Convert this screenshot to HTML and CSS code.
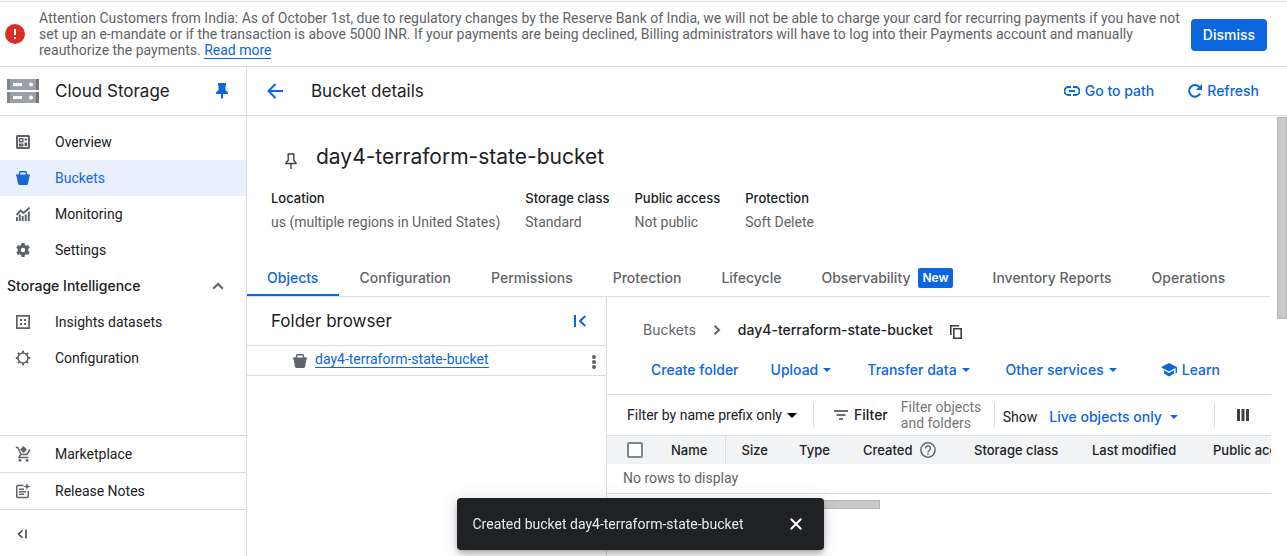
FILE: index.html
```html
<!DOCTYPE html>
<html lang="en">
<head>
<meta charset="utf-8">
<title>Bucket details – Cloud Storage</title>
<link rel="stylesheet" href="styles.css">
</head>
<body>
<div class="banner" role="alert">
  <svg class="banner-icon" width="20" height="20" viewBox="0 0 20 20"><circle cx="10" cy="10" r="10" fill="#d93025"/><path d="M9 5h2v6H9zM9 13h2v2H9z" fill="#fff"/></svg>
  <p class="banner-text">Attention Customers from India: As of October 1st, due to regulatory changes by the Reserve Bank of India, we will not be able to charge your card for recurring payments if you have not set up an e-mandate or if the transaction is above 5000 INR. If your payments are being declined, Billing administrators will have to log into their Payments account and manually reauthorize the payments. <a class="link" href="#">Read more</a></p>
  <button class="dismiss" type="button">Dismiss</button>
</div>
<div class="shell">
  <aside class="sidebar">
    <div class="product">
      <svg class="product-icon" width="32" height="24" viewBox="0 0 32 24"><path d="M0 0h32v11H0zM0 13h32v11H0z" fill="#9aa0a6"/><path d="M0 0h3v11H0zM0 13h3v11H0z" fill="#80868b"/><path d="M29 0h3v11h-3zM29 13h3v11h-3z" fill="#757575"/><path d="M6 4h9v3H6zM6 17h9v3H6z" fill="#fff"/><circle cx="24" cy="5.500" r="2" fill="#fff"/><circle cx="24" cy="18.500" r="2" fill="#fff"/></svg>
      <span class="product-name">Cloud Storage</span>
      <button class="icon-button blue" type="button" aria-label="Unpin"><svg width="12" height="16" viewBox="0 0 12 16" fill="currentColor"><path d="M2 0h8v2l-.5.500V7L12 9.500V11H7v4l-1 1-1-1v-4H0V9.500L2.500 7V2.500L2 2z"/></svg></button>
    </div>
    <nav class="nav">
      <a class="nav-item" href="#"><svg width="14" height="14" viewBox="0 0 14 14" fill="none" stroke="currentColor"><rect x="1" y="1" width="12" height="12" rx=".5" stroke-width="2"/><path stroke-width="1.500" d="M3.500 3.750h3.250v3H3.500zM3.500 9.250h3.250v1.500H3.500zM9.250 3.500v2M9.250 7.500v3.500M10.500 3.500v2M10.500 7.500v3.500"/></svg>Overview</a>
      <a class="nav-item selected" href="#" aria-current="page"><svg width="14" height="14" viewBox="0 0 14 14" fill="currentColor"><path fill-rule="evenodd" d="M3.500 0h7l1 3.500H14v1.500h-.5L12 13l-1 1H3l-1-1L.5 5H0V3.500h2.500zM4.500 1.500L4 3.500h6l-.5-2z"/></svg>Buckets</a>
      <a class="nav-item" href="#"><svg width="14" height="14" viewBox="0 0 14 14" fill="none" stroke="currentColor" stroke-width="1.900"><path d="M.5 8L4.500 3.500l3 2.500L13.500.6M1 14v-4M3.800 14V7.500M6.700 14V9M9.700 14V7.500M12.800 14V4.500"/></svg>Monitoring</a>
      <a class="nav-item" href="#"><svg width="14" height="14" viewBox="0 0 14 14" fill="currentColor"><path fill-rule="evenodd" d="M5.500 0h3l.4 1.900 1.400.8 1.900-.6 1.500 2.600L12.300 6v2l1.400 1.300-1.500 2.600-1.900-.6-1.400.8-.4 1.900h-3l-.4-1.900-1.400-.8-1.900.6L.3 9.300 1.700 8V6L.3 4.700l1.500-2.600 1.900.6 1.400-.8zM7 4.800a2.200 2.200 0 1 0 0 4.400 2.200 2.200 0 0 0 0-4.400z"/></svg>Settings</a>
      <button class="nav-group" type="button" aria-expanded="true">Storage Intelligence<svg width="12" height="8" viewBox="0 0 12 8" fill="none" stroke="#5f6368" stroke-width="2"><path d="M1.200 6.800L6 2l4.800 4.800"/></svg></button>
      <a class="nav-item" href="#"><svg width="14" height="14" viewBox="0 0 14 14" fill="currentColor"><path fill-rule="evenodd" d="M0 0h14v14H0zM1.700 1.700v10.600h10.600V1.700z"/><path d="M4 4h2v2H4zM8 4h2v2H8zM4 8h2v2H4zM8 8h2v2H8z"/></svg>Insights datasets</a>
      <a class="nav-item" href="#"><svg width="16" height="16" viewBox="0 0 16 16" fill="none" stroke="currentColor"><circle cx="8" cy="8" r="5" stroke-width="1.600"/><path stroke-width="2" d="M8 .8v2M8 13.200v2M.8 8h2M13.200 8h2M2.900 2.900l1.400 1.400M11.700 11.700l1.400 1.400M2.900 13.100l1.400-1.400M11.700 4.300l1.400-1.400"/></svg>Configuration</a>
    </nav>
    <div class="nav-footer">
      <a class="nav-item" href="#"><svg width="16" height="16" viewBox="0 0 16 16" fill="none" stroke="currentColor" stroke-width="1.500"><path d="M.8 1.500h2L6 8.500h6l3-5M5.500 8.500L4 11.500h9.500"/><path d="M8.500 0L12 3.500 8.500 7 5 3.500z" fill="currentColor" stroke="none"/><circle cx="5" cy="14.300" r="1.400" fill="currentColor" stroke="none"/><circle cx="12" cy="14.300" r="1.400" fill="currentColor" stroke="none"/></svg>Marketplace</a>
      <a class="nav-item" href="#"><svg width="16" height="16" viewBox="0 0 16 16" fill="none" stroke="currentColor" stroke-width="1.500"><path d="M8.500 2.500H2.750a1 1 0 0 0-1 1v10a1 1 0 0 0 1 1h9.500a1 1 0 0 0 1-1V8M4 6.200h5M4 8.700h7M4 11.200h5"/><path d="M12 0l.9 2.600 2.600.9-2.600.9L12 7l-.9-2.600-2.600-.9 2.600-.9z" fill="currentColor" stroke="none"/></svg>Release Notes</a>
      <button class="collapse" type="button" aria-label="Collapse menu"><svg width="10" height="10" viewBox="0 0 10 10" fill="none" stroke="currentColor" stroke-width="1.500"><path d="M5.500 1.200L1.500 5l4 3.800M9 .5v9"/></svg></button>
    </div>
  </aside>
  <main class="main">
    <header class="topbar">
      <button class="icon-button blue" type="button" aria-label="Back"><svg width="16" height="16" viewBox="0 0 16 16" fill="none" stroke="currentColor" stroke-width="2"><path d="M16 8H1.500M8.500 1L1.500 8l7 7"/></svg></button>
      <h1 class="topbar-title">Bucket details</h1>
      <button class="text-button" type="button"><svg width="16" height="16" viewBox="0 0 16 16" fill="none" stroke="currentColor" stroke-width="1.800"><path d="M7 4H4.500a4 4 0 0 0 0 8H7M9 4h2.500a4 4 0 0 1 0 8H9M5 8h6"/></svg>Go to path</button>
      <button class="text-button" type="button"><svg width="14" height="14" viewBox="0 0 14 14"><path d="M12.100 9.500A5.800 5.800 0 1 1 11.300 3" fill="none" stroke="currentColor" stroke-width="2"/><path d="M14 0v6H8z" fill="currentColor"/></svg>Refresh</button>
    </header>
    <div class="content">
      <div class="page">
        <div class="title-row">
          <button class="icon-button" type="button" aria-label="Pin bucket"><svg width="12" height="16" viewBox="0 0 12 16" fill="none" stroke="#3c4043" stroke-width="1.400"><path d="M2.500 1h7M3.200 1v6.500L1 9.800v.7h10v-.7L8.800 7.500V1M6 10.500V16"/></svg></button>
          <h2 class="bucket-title">day4-terraform-state-bucket</h2>
        </div>
        <dl class="facts">
          <div><dt>Location</dt><dd>us (multiple regions in United States)</dd></div>
          <div><dt>Storage class</dt><dd>Standard</dd></div>
          <div><dt>Public access</dt><dd>Not public</dd></div>
          <div><dt>Protection</dt><dd>Soft Delete</dd></div>
        </dl>
        <div class="tabs" role="tablist">
          <button class="tab active" type="button" role="tab" aria-selected="true">Objects</button>
          <button class="tab" type="button" role="tab">Configuration</button>
          <button class="tab" type="button" role="tab">Permissions</button>
          <button class="tab" type="button" role="tab">Protection</button>
          <button class="tab" type="button" role="tab">Lifecycle</button>
          <button class="tab" type="button" role="tab">Observability<span class="new">New</span></button>
          <button class="tab" type="button" role="tab">Inventory Reports</button>
          <button class="tab" type="button" role="tab">Operations</button>
        </div>
        <div class="split">
          <section class="folders">
            <div class="folders-head">
              <h3 class="folders-title">Folder browser</h3>
              <button class="icon-button blue" type="button" aria-label="Hide folder browser"><svg width="12" height="12" viewBox="0 0 12 12" fill="none" stroke="currentColor" stroke-width="2"><path d="M1 0v12M11.300 1L6 6l5.300 5"/></svg></button>
            </div>
            <div class="folder-row">
              <svg width="14" height="14" viewBox="0 0 14 14" fill="#5f6368"><path fill-rule="evenodd" d="M3.500 0h7l1 3.500H14v1.500h-.5L12 13l-1 1H3l-1-1L.5 5H0V3.500h2.500zM4.500 1.500L4 3.500h6l-.5-2z"/></svg>
              <a class="link" href="#">day4-terraform-state-bucket</a>
              <button class="icon-button more" type="button" aria-label="More actions"><svg width="4" height="14" viewBox="0 0 4 14" fill="#5f6368"><circle cx="2" cy="2" r="2"/><circle cx="2" cy="7" r="2"/><circle cx="2" cy="12" r="2"/></svg></button>
            </div>
          </section>
          <section class="objects">
            <nav class="crumbs">
              <a class="crumb" href="#">Buckets</a>
              <svg width="8" height="10" viewBox="0 0 8 10" fill="none" stroke="#5f6368" stroke-width="2"><path d="M1.500.8L6 5 1.500 9.200"/></svg>
              <span class="crumb-current">day4-terraform-state-bucket</span>
              <button class="icon-button copy" type="button" aria-label="Copy path"><svg width="12" height="14" viewBox="0 0 12 14" fill="none" stroke="#3c4043" stroke-width="1.600"><path d="M.8 10V.8H9M3.800 3.800h7.400v9.400H3.800z"/></svg></button>
            </nav>
            <div class="actions">
              <button class="text-button create" type="button">Create folder</button>
              <button class="text-button" type="button">Upload<svg class="caret" width="8" height="4" viewBox="0 0 8 4"><path d="M0 0h8L4 4z"/></svg></button>
              <button class="text-button" type="button">Transfer data<svg class="caret" width="8" height="4" viewBox="0 0 8 4"><path d="M0 0h8L4 4z"/></svg></button>
              <button class="text-button" type="button">Other services<svg class="caret" width="8" height="4" viewBox="0 0 8 4"><path d="M0 0h8L4 4z"/></svg></button>
              <button class="text-button learn" type="button"><svg width="16" height="14" viewBox="0 0 16 14" fill="currentColor"><path d="M8 0l8 4.300V10h-1.500V5.100L8 8.600 0 4.300zM3 7.300l5 2.700 5-2.700v3.300L8 13.500l-5-2.900z"/></svg>Learn</button>
            </div>
            <div class="filters">
              <button class="prefix" type="button">Filter by name prefix only<svg width="10" height="5" viewBox="0 0 10 5"><path d="M0 0h10L5 5z"/></svg></button>
              <span class="rule wide"></span>
              <label class="filter-label" for="filter"><svg width="14" height="10" viewBox="0 0 14 10" fill="none" stroke="#3c4043" stroke-width="1.600"><path d="M0 1h14M2.500 5h9M5 9h4"/></svg>Filter</label>
              <textarea class="filter-input" id="filter" rows="2" placeholder="Filter objects and folders"></textarea>
              <span class="rule"></span>
              <span class="show">Show</span>
              <button class="text-button live" type="button">Live objects only<svg class="caret" width="8" height="4" viewBox="0 0 8 4"><path d="M0 0h8L4 4z"/></svg></button>
              <span class="rule end"></span>
              <button class="icon-button columns" type="button" aria-label="Column display options"><svg width="12" height="12" viewBox="0 0 12 12" fill="#3c4043"><path d="M0 0h3v12H0zM4.500 0h3v12h-3zM9 0h3v12H9z"/></svg></button>
            </div>
            <div class="table-wrap">
              <table class="table">
                <colgroup><col class="c-check"><col class="c-name"><col class="c-size"><col class="c-type"><col class="c-created"><col class="c-class"><col class="c-modified"><col class="c-access"></colgroup>
                <thead><tr>
                  <th class="check-cell"><input class="check" type="checkbox" aria-label="Select all"></th>
                  <th class="divided">Name</th><th>Size</th><th>Type</th>
                  <th><span class="with-help">Created<svg width="16" height="16" viewBox="0 0 16 16" fill="none" stroke="#5f6368" stroke-width="1.400"><circle cx="8" cy="8" r="7.200"/><path d="M5.600 6.400a2.400 2.400 0 1 1 3.800 1.900C8.500 9 8 9.300 8 10.200"/><path d="M8 11.300v1.500"/></svg></span></th>
                  <th>Storage class</th><th>Last modified</th><th>Public access</th>
                </tr></thead>
                <tbody><tr><td colspan="8">No rows to display</td></tr></tbody>
              </table>
            </div>
            <div class="h-thumb"></div>
          </section>
        </div>
      </div>
      <div class="v-thumb"></div>
    </div>
  </main>
</div>
<div class="snackbar" role="status"><span>Created bucket day4-terraform-state-bucket</span><button class="icon-button" type="button" aria-label="Close"><svg width="12" height="12" viewBox="0 0 12 12" fill="none" stroke="#fff" stroke-width="2"><path d="M.7.7l10.600 10.600M11.300.7L.7 11.300"/></svg></button></div>
</body>
</html>
```
FILE: styles.css
```css
:root {
  --sans: Roboto, "Liberation Sans", sans-serif;
  --display: Inter, "Liberation Sans", sans-serif;
  --blue: #0b66e0;
  --ink: #202124;
  --muted: #5f6368;
  --line: #dadce0;
}

* { box-sizing: border-box; }

body {
  display: flex;
  flex-direction: column;
  height: 100vh;
  margin: 0;
  overflow: hidden;
  color: var(--ink);
  background: #fff;
  font: 14px/16px var(--sans);
}

h1, h2, h3, p, dl, dd { margin: 0; }
a { color: inherit; text-decoration: none; }
svg { flex: none; display: block; }

button {
  margin: 0;
  padding: 0;
  border: 0;
  color: inherit;
  background: none;
  font: inherit;
  white-space: nowrap;
}

.icon-button { display: flex; align-items: center; justify-content: center; }
.blue { color: var(--blue); }
.link { color: var(--blue); border-bottom: 1px solid var(--blue); }

.banner {
  display: flex;
  align-items: center;
  gap: 8px;
  margin-top: 1px;
  padding: 8px 20px 8px 5px;
  border-top: 1px solid var(--line);
  border-bottom: 1px solid var(--line);
}
.banner-icon { margin-right: 6px; }
.banner-text { flex: 1; color: var(--muted); }
.dismiss {
  height: 32px;
  margin-top: 2px;
  padding: 0 12px;
  border-radius: 4px;
  color: #fff;
  background: var(--blue);
  font: 500 14px/16px var(--display);
}

.shell { display: flex; flex: 1; min-height: 0; }

.sidebar {
  display: flex;
  flex: none;
  flex-direction: column;
  width: 247px;
  border-right: 1px solid var(--line);
}
.product, .topbar {
  display: flex;
  flex: none;
  align-items: center;
  height: 49px;
  border-bottom: 1px solid var(--line);
}
.product { gap: 16px; padding: 0 18px 0 7px; }
.product-name { flex: 1; font: 17px/24px var(--display); }

.nav { flex: 1; padding-top: 8px; }
.nav-item {
  display: grid;
  grid-template-columns: 32px 1fr;
  align-items: center;
  height: 36px;
  padding-left: 7px;
  column-gap: 16px;
}
.nav-item svg { justify-self: center; color: var(--muted); }
.selected { color: #1967d2; background: #e8f0fe; }
.selected svg { color: #1967d2; }
.nav-group {
  display: flex;
  align-items: center;
  justify-content: space-between;
  width: 100%;
  height: 36px;
  padding: 0 22px 0 7px;
  font: 500 14px/16px var(--display);
}
.nav-footer .nav-item { height: 37px; border-top: 1px solid var(--line); }
.collapse {
  display: flex;
  align-items: center;
  width: 100%;
  height: 47px;
  padding: 2px 0 0 17px;
  border-top: 1px solid var(--line);
  color: #3c4043;
}

.main { display: flex; flex: 1; flex-direction: column; min-width: 0; }
.topbar { gap: 32px; padding: 0 28px 0 20px; }
.topbar-title { flex: 1; margin-left: -4px; font: 17px/24px var(--display); }
.topbar .text-button + .text-button { margin-left: 2px; }
.text-button {
  display: flex;
  align-items: center;
  gap: 5px;
  color: var(--blue);
  font: 500 14px/20px var(--display);
}
.caret { fill: currentColor; }

.content { display: flex; flex: 1; min-height: 0; gap: 6px; }
.page { display: flex; flex: 1; flex-direction: column; min-width: 0; padding-top: 24px; }
.v-thumb {
  width: 10px;
  height: 202px;
  margin-top: 1px;
  border: 1px solid #b4b4b4;
  background: #c9c9c9;
}

.title-row { display: flex; align-items: center; gap: 19px; padding-left: 38px; }
.title-row .icon-button { padding-top: 8px; }
.bucket-title { font: 21px/34px var(--display); }
.facts { display: flex; gap: 25px; padding: 12px 24px 0; white-space: nowrap; }
.facts dt { font: 500 13px/24px var(--display); }
.facts dd { color: var(--muted); line-height: 24px; }

.tabs {
  display: flex;
  flex: none;
  height: 37px;
  margin-top: 26px;
  border-bottom: 1px solid var(--line);
}
.tab {
  display: flex;
  align-items: center;
  gap: 8px;
  padding: 2px 20px 0;
  border-bottom: 2px solid transparent;
  color: var(--muted);
  font: 500 14px/20px var(--display);
}
.active { padding-right: 21px; color: var(--blue); border-color: var(--blue); }
.new {
  padding: 0 4px;
  border-radius: 2px;
  color: #fff;
  background: var(--blue);
  font: 600 12px/20px var(--display);
}

.split { display: flex; flex: 1; min-height: 0; }
.folders { flex: none; width: 360px; border-right: 1px solid var(--line); }
.folders-head {
  display: flex;
  align-items: center;
  justify-content: space-between;
  height: 49px;
  padding: 0 20px 0 24px;
  border-bottom: 1px solid var(--line);
}
.folders-title { font: 17px/24px var(--display); }
.folder-row {
  display: flex;
  align-items: center;
  gap: 8px;
  height: 30px;
  padding: 0 10px 0 46px;
  border-bottom: 1px solid var(--line);
}
.folder-row .link { margin-bottom: 2px; }
.folder-row .more { margin: 2px 0 0 auto; }

.objects { flex: 1; min-width: 0; }
.crumbs { display: flex; align-items: center; gap: 17px; padding: 21px 36px 0; }
.crumb { color: var(--muted); font: 400 14px/24px var(--display); }
.crumb-current { font: 500 14px/24px var(--display); }
.copy { padding-top: 4px; }
.actions { display: flex; gap: 36px; padding: 18px 44px 14px; }
.create { margin-right: -4px; }
.learn { margin-left: 8px; }

.filters {
  display: flex;
  align-items: center;
  height: 41px;
  padding: 0 22px 0 20px;
  border-top: 1px solid var(--line);
  gap: 8px;
}
.prefix { display: flex; align-items: center; gap: 5px; }
.rule { width: 1px; height: 24px; background: var(--line); }
.rule.wide { margin: 0 8px; }
.rule.end { margin: 0 14px 0 auto; }
.filter-label {
  display: flex;
  align-items: center;
  gap: 6px;
  margin: 0 5px 0 4px;
  font: 500 14px/20px var(--display);
}
.filter-input {
  width: 85px;
  height: 32px;
  padding: 0;
  border: 0;
  resize: none;
  overflow: hidden;
  background: none;
  font: 14px/16px var(--sans);
}
.filter-input::placeholder { color: #747775; }
.show, .live { padding-top: 4px; }
.live { gap: 8px; margin-left: 4px; }

.table-wrap { overflow: hidden; }
.table { width: 720px; border-collapse: collapse; table-layout: fixed; }
.c-check { width: 48px; }
.c-name { width: 70px; }
.c-size { width: 58px; }
.c-type { width: 64px; }
.c-created { width: 111px; }
.c-class { width: 118px; }
.c-modified { width: 121px; }
.c-access { width: 130px; }
.table th {
  height: 28px;
  padding: 0 0 0 16px;
  border-top: 1px solid var(--line);
  background: #f1f3f4;
  font: 500 13px/16px var(--display);
  text-align: left;
  white-space: nowrap;
}
.table .check-cell { padding-left: 20px; }
.table .divided { border-right: 1px solid var(--line); }
.with-help { display: flex; align-items: center; gap: 8px; }
.check {
  display: block;
  width: 16px;
  height: 16px;
  margin: 0;
  border: 2px solid #80868b;
  border-radius: 2px;
  appearance: none;
  background: #fff;
}
.table td {
  height: 30px;
  padding: 0 16px;
  border-bottom: 1px solid var(--line);
  color: var(--muted);
}
.h-thumb {
  width: 273px;
  height: 9px;
  margin-top: 6px;
  border: 1px solid #b4b4b4;
  background: #c9c9c9;
}

.snackbar {
  position: fixed;
  bottom: 6px;
  left: 50%;
  display: flex;
  align-items: center;
  justify-content: space-between;
  width: 367px;
  height: 52px;
  margin-left: -187px;
  padding: 0 22px 0 16px;
  border-radius: 4px;
  color: #e8eaed;
  background: var(--ink);
  box-shadow: 0 3px 5px -1px rgb(0 0 0 / 20%), 0 6px 10px rgb(0 0 0 / 14%), 0 1px 18px rgb(0 0 0 / 12%);
}
```
